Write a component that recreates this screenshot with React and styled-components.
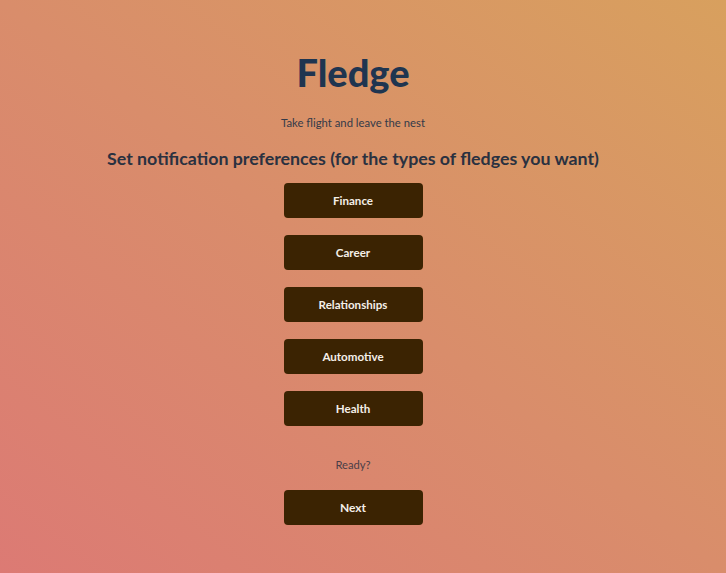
import React from "react";
import styled, { createGlobalStyle } from "styled-components";

const GlobalStyle = createGlobalStyle`
  html, body {
    margin: 0;
    padding: 0;
    height: 100%;
  }
  #root {
    min-height: 100vh;
  }
  body {
    font-family: Lato, "Noto Sans", sans-serif;
  }
`;

const Page = styled.div`
  min-height: 100vh;
  background: linear-gradient(to top right, #dc7a74 0%, #d98d6b 50%, #d8a05e 100%);
  display: flex;
  flex-direction: column;
  align-items: center;
  padding: 50px 20px 0 0;
  box-sizing: border-box;
`;

const Title = styled.h1`
  margin: 0;
  font-size: 38px;
  font-weight: 900;
  color: #1f3550;
  line-height: 44px;
`;

const Tagline = styled.p`
  margin: 21px 0 0;
  font-size: 11.3px;
  color: #343a48;
  line-height: 16px;
`;

const Heading = styled.h2`
  margin: 15px 0 0;
  font-size: 17.8px;
  font-weight: 700;
  color: #2a3140;
  line-height: 24px;
`;

// list of preference toggles
const Options = styled.div`
  display: flex;
  flex-direction: column;
  gap: 17px;
  margin-top: 13px;
`;

const Button = styled.button`
  width: 139px;
  height: 35px;
  border: none;
  border-radius: 4px;
  background: ${(p) => (p.$active ? "#5a3a10" : "#3b2302")};
  color: #f4efe8;
  font-family: inherit;
  font-size: 11.6px;
  font-weight: 700;
  cursor: pointer;
`;

const Ready = styled.p`
  margin: 31px 0 0;
  font-size: 11.2px;
  color: #4a3e48;
  line-height: 16px;
`;

const NextButton = styled(Button)`
  margin-top: 17px;
  font-size: 12px;
`;

const categories = ["Finance", "Career", "Relationships", "Automotive", "Health"];

export default function App() {
  const [picked, setPicked] = React.useState([]);
  const toggle = (c) =>
    setPicked((p) => (p.includes(c) ? p.filter((x) => x !== c) : [...p, c]));

  return (
    <>
      <GlobalStyle />
      <Page>
        <Title>Fledge</Title>
        <Tagline>Take flight and leave the nest</Tagline>
        <Heading>Set notification preferences (for the types of fledges you want)</Heading>
        <Options>
          {categories.map((c) => (
            <Button key={c} $active={picked.includes(c)} onClick={() => toggle(c)}>
              {c}
            </Button>
          ))}
        </Options>
        <Ready>Ready?</Ready>
        <NextButton>Next</NextButton>
      </Page>
    </>
  );
}
